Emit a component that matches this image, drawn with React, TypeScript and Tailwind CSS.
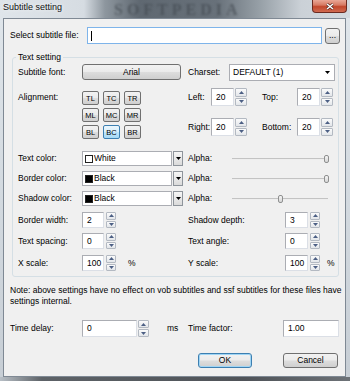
import React from 'react';

const ui = "font-['Liberation_Sans',Arial,Helvetica,sans-serif] text-[8.5px] leading-[11px] text-black";

function Tri({ up, color }: { up?: boolean; color: string }) {
  return (
    <svg width="5" height="3" viewBox="0 0 5 3">
      <path d={up ? 'M0 3 L2.5 0 L5 3 Z' : 'M0 0 L2.5 3 L5 0 Z'} fill={color} />
    </svg>
  );
}

function SpinButtons({ w }: { w: string }) {
  return (
    <div className={`flex flex-col gap-px ${w}`}>
      <div className="flex flex-1 items-center justify-center rounded-[1px] border border-[#b3b9c2] bg-[linear-gradient(#fbfbfb,#e3e6ea)]">
        <Tri up color="#4c5f84" />
      </div>
      <div className="flex flex-1 items-center justify-center rounded-[1px] border border-[#b3b9c2] bg-[linear-gradient(#fbfbfb,#e3e6ea)]">
        <Tri color="#4c5f84" />
      </div>
    </div>
  );
}

function Field({ value, w }: { value: string; w: string }) {
  return (
    <div className={`flex items-center border border-[#abadb3] border-b-[#dbdfe6] border-r-[#dbdfe6] bg-white pl-[4px] ${w}`}>
      {value}
    </div>
  );
}

function PushButton({ label, w, isDefault }: { label: string; w: string; isDefault?: boolean }) {
  return (
    <div
      className={`flex items-center justify-center rounded-[3px] border bg-[linear-gradient(#f2f2f2_0%,#ebebeb_48%,#dddddd_52%,#cfcfcf_100%)] ${w} ${
        isDefault ? 'border-[#3c7fb1] shadow-[inset_0_0_0_1px_#9fd5f5]' : 'border-[#707070]'
      }`}
    >
      {label}
    </div>
  );
}

function AlignBtn({ t, on }: { t: string; on?: boolean }) {
  return (
    <div
      className={
        on
          ? 'flex h-[14px] w-[17px] items-center justify-center rounded-[2px] border border-[#3c7fb1] bg-[linear-gradient(#eaf6fd_0%,#d9f0fc_48%,#bee6fd_52%,#a7d9f5_100%)] text-[7.5px]'
          : 'flex h-[14px] w-[17px] items-center justify-center rounded-[2px] border border-[#707070] bg-[linear-gradient(#f2f2f2_0%,#ebebeb_48%,#dddddd_52%,#cfcfcf_100%)] text-[7.5px]'
      }
    >
      {t}
    </div>
  );
}

function ColorCombo({ label, swatch }: { label: string; swatch: string }) {
  return (
    <div className="flex h-full gap-px">
      <div className="flex w-[90px] items-center gap-px border border-[#abadb3] bg-white pl-[2px]">
        <span className={`h-[8px] w-[8px] border border-[#222] ${swatch}`} />
        <span>{label}</span>
      </div>
      <div className="flex w-[10px] items-center justify-center border border-[#8e949b] bg-[linear-gradient(#f6f6f6,#dadada)]">
        <Tri color="#000" />
      </div>
    </div>
  );
}

function Slider({ pos }: { pos: number }) {
  return (
    <div className="relative flex h-full w-[96px] items-center">
      <div className="h-[2px] w-full border-t border-[#c3c3c3] bg-[#eeeeee]" />
      <div
        className="absolute top-1/2 h-[8px] w-[5px] -translate-y-1/2 rounded-[2px] border border-[#8f9090] bg-[linear-gradient(#f5f5f5,#d6d6d6)]"
        style={{ left: pos }}
      />
    </div>
  );
}

const colors = [
  { label: 'Text color:', name: 'White', swatch: 'bg-white', pos: 92, mt: 'mt-[11px]' },
  { label: 'Border color:', name: 'Black', swatch: 'bg-black', pos: 92, mt: 'mt-[5px]' },
  { label: 'Shadow color:', name: 'Black', swatch: 'bg-black', pos: 46, mt: 'mt-[5px]' },
];

const spins = [
  { l: 'Border width:', lv: '2', r: 'Shadow depth:', rv: '3', mt: 'mt-[6px]', pct: false },
  { l: 'Text spacing:', lv: '0', r: 'Text angle:', rv: '0', mt: 'mt-[5px]', pct: false },
  { l: 'X scale:', lv: '100', r: 'Y scale:', rv: '100', mt: 'mt-[6px]', pct: true },
];

export default function App() {
  return (
    <div className={`relative flex h-[381px] w-[350px] flex-col overflow-hidden bg-[#d6dde4] ${ui}`}>
      {/* title bar */}
      <div className="relative h-[18px] overflow-hidden bg-[linear-gradient(90deg,#dfe5ea_0%,#d6dce2_24%,#8d969e_30%,#5f6871_40%,#68717a_62%,#9aa3aa_75%,#cbd1d7_86%,#d3d9de_100%)]">
        <span className="absolute left-[114px] top-[1px] font-['Liberation_Serif',serif] text-[16px] font-bold leading-[18px] tracking-[4px] text-[#3f464d] opacity-60 blur-[1px]">
          SOFTPEDIA
        </span>
        <span className="relative block pl-[3px] pt-[2px] text-[9px] text-[#111] [text-shadow:0_0_4px_#ffffff]">
          Subtitle setting
        </span>
        <div className="absolute right-[3px] top-0 flex h-[13px] w-[35px] items-center justify-center rounded-b-[4px] border border-t-0 border-[#6b2a20] bg-[linear-gradient(#e9a796_0%,#d77a63_42%,#c2472c_55%,#d06a50_100%)]">
          <svg width="8" height="7" viewBox="0 0 8 7">
            <path d="M1 1 L7 6 M7 1 L1 6" stroke="#3b1610" strokeWidth="2.6" />
            <path d="M1 1 L7 6 M7 1 L1 6" stroke="#ffffff" strokeWidth="1.6" />
          </svg>
        </div>
      </div>

      <div className="flex flex-1">
        <div className="w-[3px] bg-[linear-gradient(#dfe5ea,#c7ced5)]" />
        {/* client area */}
        <div className="relative flex flex-1 flex-col border border-[#7f8994] bg-[#f0f0f0]">
          <div className="mt-[8px] flex h-[17px] items-center pl-[6px]">
            <span className="w-[77px]">Select subtitle file:</span>
            <div className="flex h-full w-[235px] items-center border border-[#7eb4ea] bg-white pl-[3px]">
              <span className="h-[10px] w-px bg-black" />
            </div>
            <div className="ml-[3px] h-[16px]">
              <PushButton label="..." w="w-[15px] h-full" />
            </div>
          </div>

          {/* Text setting group */}
          <div className="relative ml-[8px] mt-[13px] flex h-[220px] w-[327px] flex-col rounded-[3px] border border-[#d5dfe5] pl-[5px]">
            <span className="absolute -top-[6px] left-[3px] bg-[#f0f0f0] px-[2px]">Text setting</span>

            <div className="mt-[6px] flex h-[16px] items-center">
              <div className="flex h-full w-[170px] items-center">
                <span className="w-[64px]">Subtitle font:</span>
                <PushButton label="Arial" w="w-[99px] h-full" />
              </div>
              <span className="w-[41px]">Charset:</span>
              <div className="flex h-[17px] w-[106px] items-center justify-between border border-[#abadb3] bg-white pl-[3px] pr-[4px]">
                <span>DEFAULT (1)</span>
                <Tri color="#000" />
              </div>
            </div>

            <div className="mt-[8px] flex h-[52px]">
              <div className="flex w-[170px]">
                <span className="mt-[4px] w-[64px]">Alignment:</span>
                <div className="mt-[3px] grid grid-cols-3 gap-x-[4px] gap-y-[3px] self-start">
                  <AlignBtn t="TL" />
                  <AlignBtn t="TC" />
                  <AlignBtn t="TR" />
                  <AlignBtn t="ML" />
                  <AlignBtn t="MC" />
                  <AlignBtn t="MR" />
                  <AlignBtn t="BL" />
                  <AlignBtn t="BC" on />
                  <AlignBtn t="BR" />
                </div>
              </div>
              <div className="flex flex-col">
                <div className="flex h-[18px] items-center">
                  <span className="w-[23px]">Left:</span>
                  <div className="flex h-full gap-px">
                    <Field value="20" w="w-[23px]" />
                    <SpinButtons w="w-[12px]" />
                  </div>
                  <span className="ml-[15px] w-[35px]">Top:</span>
                  <div className="flex h-full gap-px">
                    <Field value="20" w="w-[23px]" />
                    <SpinButtons w="w-[12px]" />
                  </div>
                </div>
                <div className="mt-[12px] flex h-[18px] items-center">
                  <span className="w-[23px]">Right:</span>
                  <div className="flex h-full gap-px">
                    <Field value="20" w="w-[23px]" />
                    <SpinButtons w="w-[12px]" />
                  </div>
                  <span className="ml-[15px] w-[35px]">Bottom:</span>
                  <div className="flex h-full gap-px">
                    <Field value="20" w="w-[23px]" />
                    <SpinButtons w="w-[12px]" />
                  </div>
                </div>
              </div>
            </div>

            {colors.map((c) => (
              <div key={c.label} className={`flex h-[15px] items-center ${c.mt}`}>
                <div className="flex h-full w-[170px] items-center">
                  <span className="w-[64px]">{c.label}</span>
                  <ColorCombo label={c.name} swatch={c.swatch} />
                </div>
                <span className="w-[44px]">Alpha:</span>
                <Slider pos={c.pos} />
              </div>
            ))}

            {spins.map((s) => (
              <div key={s.l} className={`flex h-[16px] items-center ${s.mt}`}>
                <div className="flex h-full w-[170px] items-center">
                  <span className="w-[64px]">{s.l}</span>
                  <div className="flex h-full gap-[2px]">
                    <Field value={s.lv} w="w-[22px]" />
                    <SpinButtons w="w-[10px]" />
                  </div>
                  {s.pct && <span className="ml-[12px]">%</span>}
                </div>
                <span className="w-[97px]">{s.r}</span>
                <div className="flex h-full gap-[2px]">
                  <Field value={s.rv} w="w-[23px]" />
                  <SpinButtons w="w-[10px]" />
                </div>
                {s.pct && <span className="ml-[7px]">%</span>}
              </div>
            ))}
          </div>

          <p className="mt-[8px] pl-[6px]">
            Note: above settings have no effect on vob subtitles and ssf subtitles for these files have
            <br />
            settings internal.
          </p>

          <div className="mt-[13px] flex h-[17px] items-center pl-[6px]">
            <div className="flex h-full w-[178px] items-center">
              <span className="w-[72px]">Time delay:</span>
              <div className="flex h-full gap-px">
                <Field value="0" w="w-[55px]" />
                <SpinButtons w="w-[11px]" />
              </div>
              <span className="ml-[18px]">ms</span>
            </div>
            <span className="w-[95px]">Time factor:</span>
            <Field value="1.00" w="w-[56px] h-full" />
          </div>

          <div className="mt-[16px] flex h-[15px] pl-[194px]">
            <PushButton label="OK" w="w-[54px] h-full" isDefault />
            <div className="ml-[31px] h-full">
              <PushButton label="Cancel" w="w-[55px] h-full" />
            </div>
          </div>
        </div>
        <div className="w-[4px] bg-[linear-gradient(#dfe5ea,#c7ced5)]" />
      </div>
      <div className="h-[4px] bg-[linear-gradient(90deg,#b8bfc6,#5d6267_12%,#4f5358_70%,#6d7277_100%)]" />
    </div>
  );
}
